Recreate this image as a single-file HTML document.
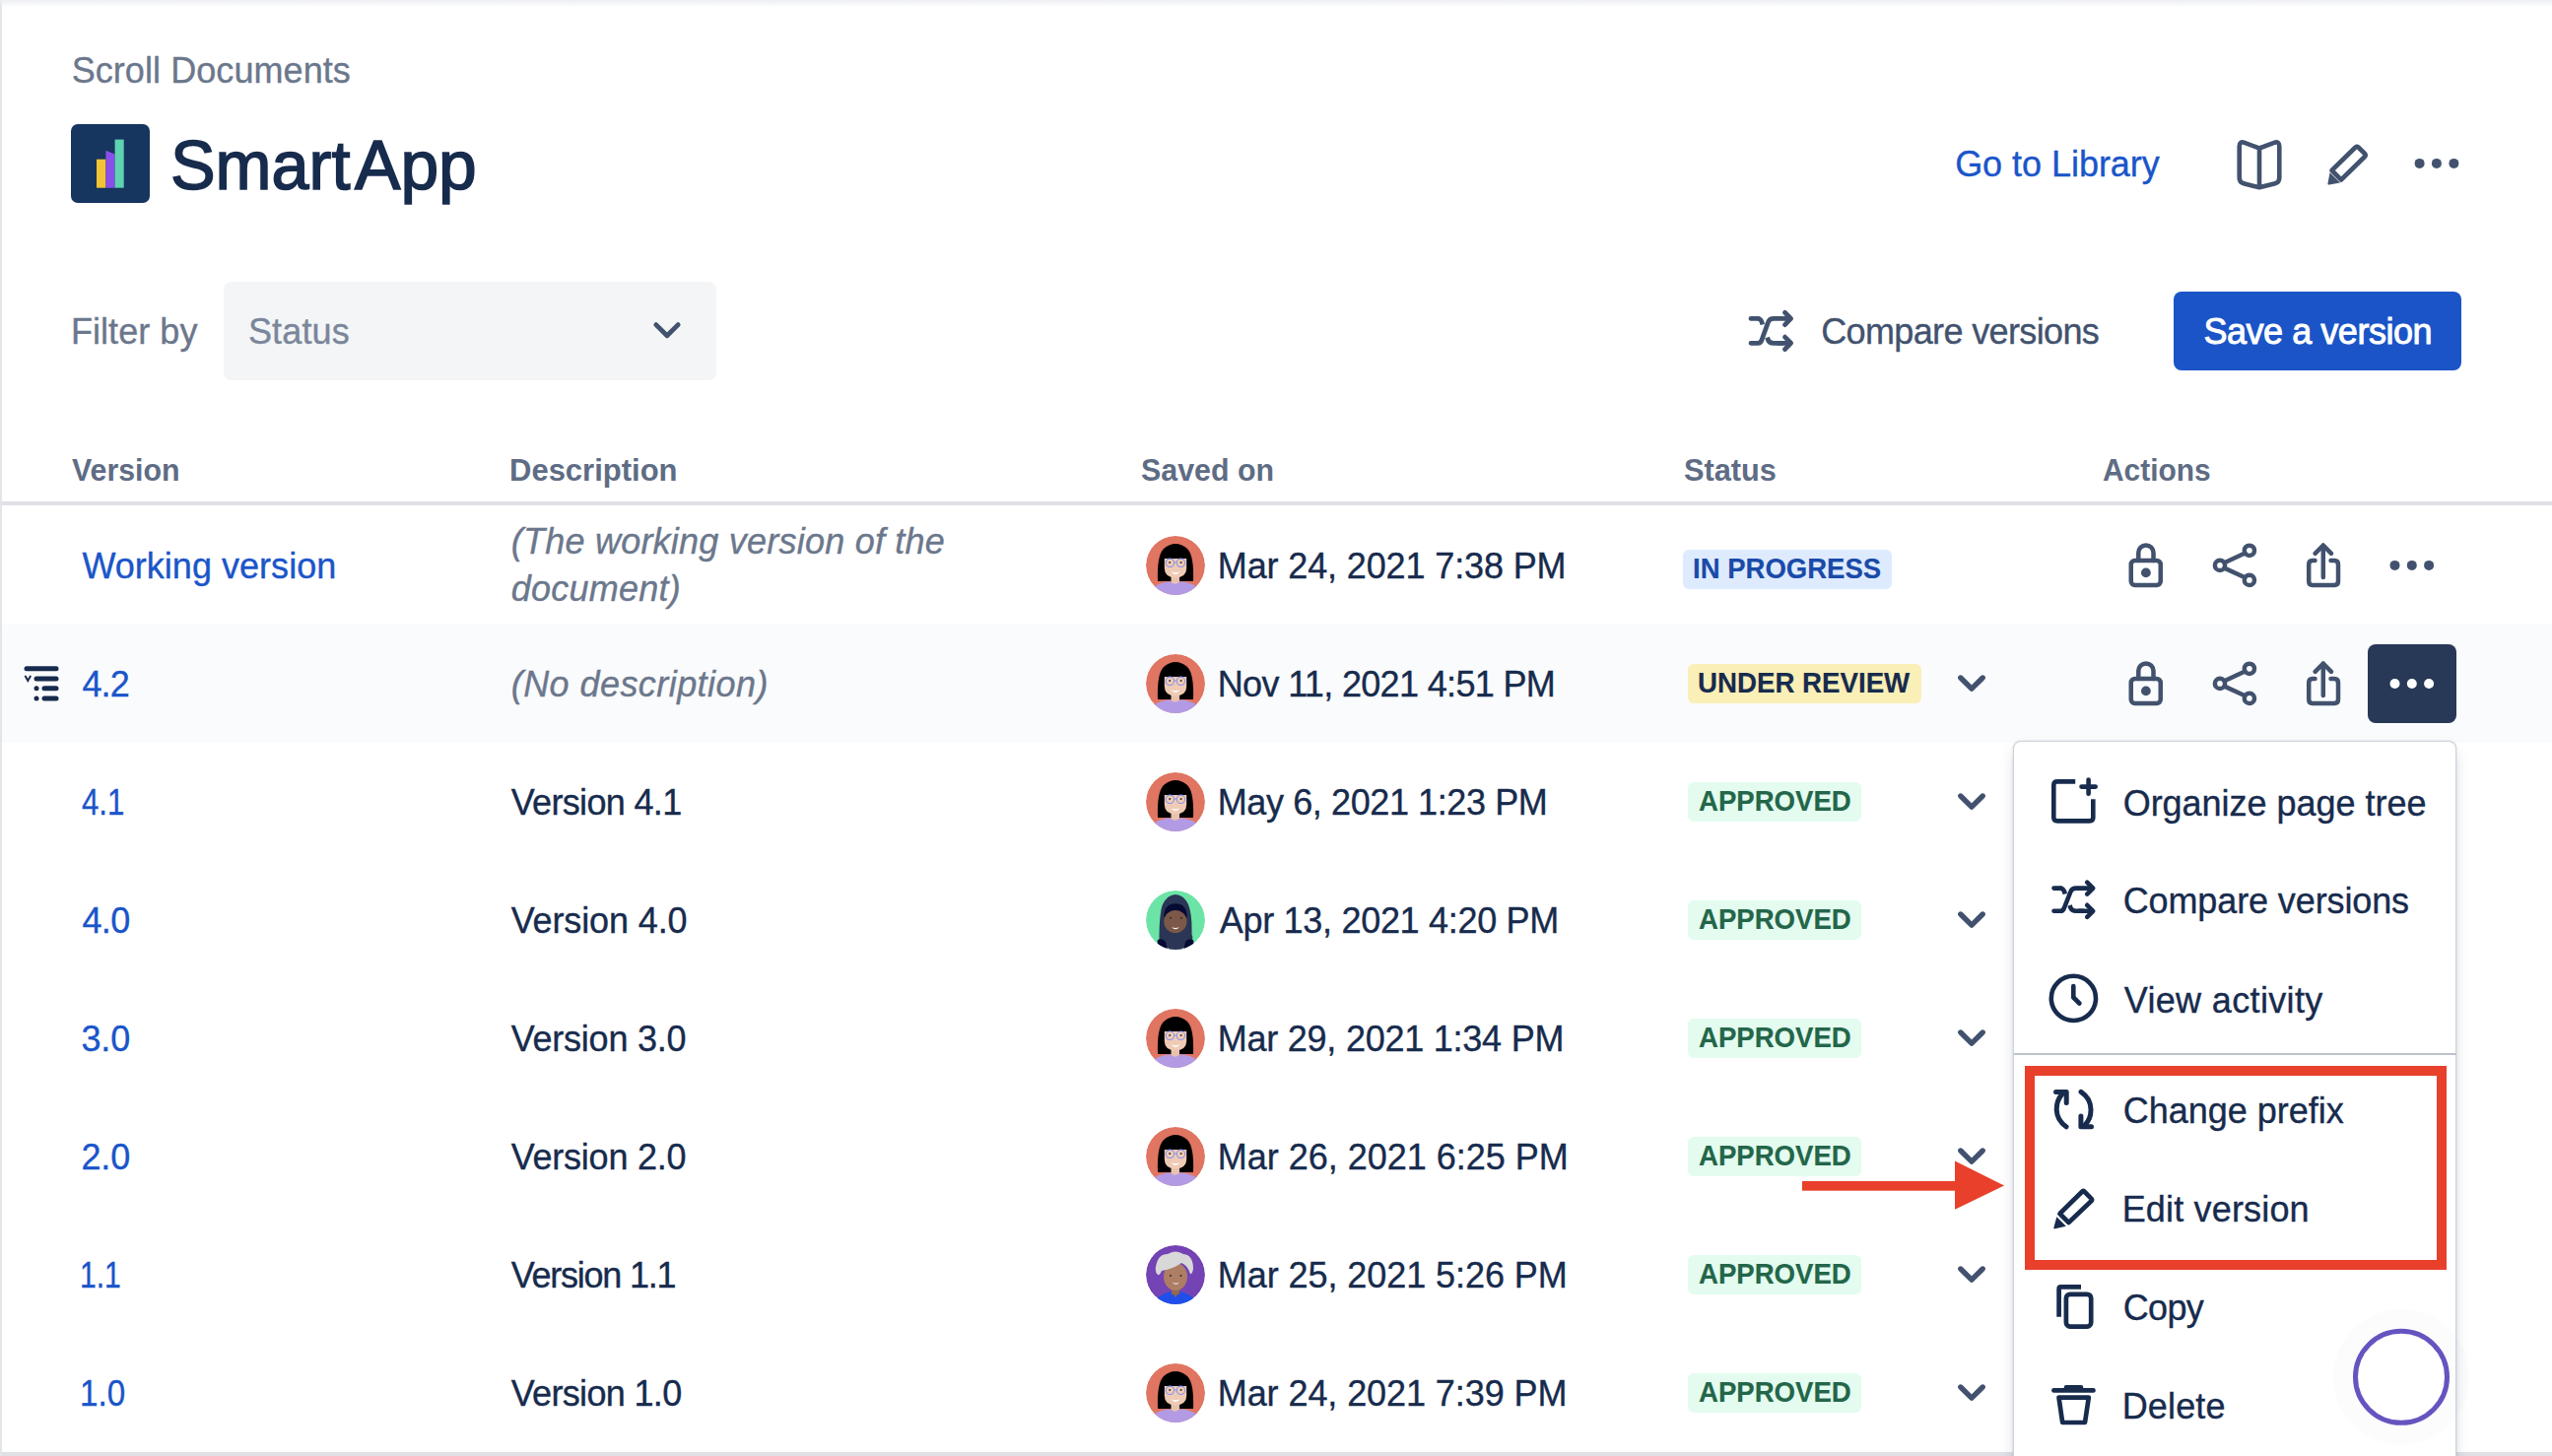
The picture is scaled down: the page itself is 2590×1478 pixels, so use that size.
<!DOCTYPE html>
<html><head><meta charset="utf-8"><title>SmartApp versions</title>
<style>
html,body{margin:0;padding:0;}
body{width:2590px;height:1478px;overflow:hidden;position:relative;background:#fff;font-family:'Liberation Sans', sans-serif;}
.t{position:absolute;white-space:nowrap;}
</style></head><body>
<div style="position:absolute;left:0;top:634px;width:2590px;height:120px;background:#fafbfc"></div><svg style="position:absolute;left:72px;top:126px" width="80" height="80" viewBox="0 0 80 80">
<rect width="80" height="80" rx="7" fill="#16355f"/>
<rect x="26" y="35.7" width="9.4" height="29" fill="#f2c434"/>
<path d="M35.4 26.8 L44.6 30.6 V64.7 H35.4 Z" fill="#8a4fe8"/>
<rect x="44.6" y="15.6" width="9.1" height="49.1" fill="#5fd2b1"/>
</svg><div style="position:absolute;left:227px;top:286px;width:500px;height:100px;border-radius:8px;background:#f4f5f7"></div><div style="position:absolute;left:2206px;top:296px;width:292px;height:80px;border-radius:8px;background:#1b54c7"></div><div style="position:absolute;left:0;top:509px;width:2590px;height:4px;background:#dfe1e6"></div><div style="position:absolute;left:1708px;top:558px;width:212px;height:40px;border-radius:6px;background:#deebff"></div><div style="position:absolute;left:1712.8px;top:674px;width:237px;height:40px;border-radius:6px;background:#faefb6"></div><div style="position:absolute;left:1713px;top:794px;width:176px;height:40px;border-radius:6px;background:#e3fcef"></div><div style="position:absolute;left:1713px;top:914px;width:176px;height:40px;border-radius:6px;background:#e3fcef"></div><div style="position:absolute;left:1713px;top:1034px;width:176px;height:40px;border-radius:6px;background:#e3fcef"></div><div style="position:absolute;left:1713px;top:1154px;width:176px;height:40px;border-radius:6px;background:#e3fcef"></div><div style="position:absolute;left:1713px;top:1274px;width:176px;height:40px;border-radius:6px;background:#e3fcef"></div><div style="position:absolute;left:1713px;top:1394px;width:176px;height:40px;border-radius:6px;background:#e3fcef"></div><svg style="position:absolute;left:1163px;top:544px" width="60" height="60" viewBox="0 0 60 60"><defs><clipPath id="cp0"><circle cx="30" cy="30" r="30"/></clipPath></defs><g clip-path="url(#cp0)"><circle cx="30" cy="30" r="30" fill="#e07562"/>
<path d="M12 46 Q11 20 18 13 Q30 3 42 13 Q49 20 48 46 Z" fill="#000"/>
<path d="M18 40 Q22 47 30 48 L30 60 L18 60 Z" fill="#000" opacity="0"/>
<rect x="25.5" y="38" width="8.5" height="12" fill="#e9c2ae"/>
<path d="M18.8 23 H41.2 V33 Q41 42 30 42.5 Q19 42 18.8 33 Z" fill="#efcbb5"/>
<path d="M8 52 Q15 46.5 25 46.5 Q29.5 51 34 46.5 Q45 46.5 52 52 Q42 62 30 62 Q18 62 8 52 Z" fill="#b39ae4"/>
<g fill="none" stroke="#8593ee" stroke-width="1.05"><circle cx="24.4" cy="27.3" r="4.2"/><circle cx="35.4" cy="27.3" r="4.2"/><path d="M28.6 27 H31.2"/></g>
<circle cx="24.2" cy="27" r="1" fill="#333"/><circle cx="35.6" cy="27" r="1" fill="#333"/>
<path d="M25.5 36.3 Q30 38 34.5 36.3 Q30 41.5 25.5 36.3 Z" fill="#fff"/></g></svg><svg style="position:absolute;left:1163px;top:664px" width="60" height="60" viewBox="0 0 60 60"><defs><clipPath id="cp1"><circle cx="30" cy="30" r="30"/></clipPath></defs><g clip-path="url(#cp1)"><circle cx="30" cy="30" r="30" fill="#e07562"/>
<path d="M12 46 Q11 20 18 13 Q30 3 42 13 Q49 20 48 46 Z" fill="#000"/>
<path d="M18 40 Q22 47 30 48 L30 60 L18 60 Z" fill="#000" opacity="0"/>
<rect x="25.5" y="38" width="8.5" height="12" fill="#e9c2ae"/>
<path d="M18.8 23 H41.2 V33 Q41 42 30 42.5 Q19 42 18.8 33 Z" fill="#efcbb5"/>
<path d="M8 52 Q15 46.5 25 46.5 Q29.5 51 34 46.5 Q45 46.5 52 52 Q42 62 30 62 Q18 62 8 52 Z" fill="#b39ae4"/>
<g fill="none" stroke="#8593ee" stroke-width="1.05"><circle cx="24.4" cy="27.3" r="4.2"/><circle cx="35.4" cy="27.3" r="4.2"/><path d="M28.6 27 H31.2"/></g>
<circle cx="24.2" cy="27" r="1" fill="#333"/><circle cx="35.6" cy="27" r="1" fill="#333"/>
<path d="M25.5 36.3 Q30 38 34.5 36.3 Q30 41.5 25.5 36.3 Z" fill="#fff"/></g></svg><svg style="position:absolute;left:1163px;top:784px" width="60" height="60" viewBox="0 0 60 60"><defs><clipPath id="cp2"><circle cx="30" cy="30" r="30"/></clipPath></defs><g clip-path="url(#cp2)"><circle cx="30" cy="30" r="30" fill="#e07562"/>
<path d="M12 46 Q11 20 18 13 Q30 3 42 13 Q49 20 48 46 Z" fill="#000"/>
<path d="M18 40 Q22 47 30 48 L30 60 L18 60 Z" fill="#000" opacity="0"/>
<rect x="25.5" y="38" width="8.5" height="12" fill="#e9c2ae"/>
<path d="M18.8 23 H41.2 V33 Q41 42 30 42.5 Q19 42 18.8 33 Z" fill="#efcbb5"/>
<path d="M8 52 Q15 46.5 25 46.5 Q29.5 51 34 46.5 Q45 46.5 52 52 Q42 62 30 62 Q18 62 8 52 Z" fill="#b39ae4"/>
<g fill="none" stroke="#8593ee" stroke-width="1.05"><circle cx="24.4" cy="27.3" r="4.2"/><circle cx="35.4" cy="27.3" r="4.2"/><path d="M28.6 27 H31.2"/></g>
<circle cx="24.2" cy="27" r="1" fill="#333"/><circle cx="35.6" cy="27" r="1" fill="#333"/>
<path d="M25.5 36.3 Q30 38 34.5 36.3 Q30 41.5 25.5 36.3 Z" fill="#fff"/></g></svg><svg style="position:absolute;left:1163px;top:904px" width="60" height="60" viewBox="0 0 60 60"><defs><clipPath id="cp3"><circle cx="30" cy="30" r="30"/></clipPath></defs><g clip-path="url(#cp3)"><circle cx="30" cy="30" r="30" fill="#6ce4a6"/>
<path d="M13.5 58 Q13 24 17 14 Q22 4 30 4 Q38 4 43 14 Q47 24 46.5 44 L47.5 48 Q41 62 30 62 Q20 62 13.5 58 Z" fill="#2b3656"/>
<path d="M18.2 27 Q18.5 13.3 30 13.3 Q41.5 13.3 41.8 27 Z" fill="#050b33"/>
<ellipse cx="29.9" cy="31.5" rx="11.6" ry="11.6" fill="#7b5848"/>
<path d="M26 37 Q30 39 34 37 Q30 41.5 26 37 Z" fill="#fff"/>
<circle cx="25" cy="27.8" r="0.9" fill="#2a1a10"/><circle cx="36" cy="27.8" r="0.9" fill="#2a1a10"/>
<path d="M12 50 Q17 48 20 52 L22 62 L10 62 Z M48 50 Q43 48 40 52 L38 62 L50 62 Z" fill="#050b33"/>
<path d="M22 58 Q30 66 38 58 L38 62 L22 62 Z" fill="#f7dfe6"/></g></svg><svg style="position:absolute;left:1163px;top:1024px" width="60" height="60" viewBox="0 0 60 60"><defs><clipPath id="cp4"><circle cx="30" cy="30" r="30"/></clipPath></defs><g clip-path="url(#cp4)"><circle cx="30" cy="30" r="30" fill="#e07562"/>
<path d="M12 46 Q11 20 18 13 Q30 3 42 13 Q49 20 48 46 Z" fill="#000"/>
<path d="M18 40 Q22 47 30 48 L30 60 L18 60 Z" fill="#000" opacity="0"/>
<rect x="25.5" y="38" width="8.5" height="12" fill="#e9c2ae"/>
<path d="M18.8 23 H41.2 V33 Q41 42 30 42.5 Q19 42 18.8 33 Z" fill="#efcbb5"/>
<path d="M8 52 Q15 46.5 25 46.5 Q29.5 51 34 46.5 Q45 46.5 52 52 Q42 62 30 62 Q18 62 8 52 Z" fill="#b39ae4"/>
<g fill="none" stroke="#8593ee" stroke-width="1.05"><circle cx="24.4" cy="27.3" r="4.2"/><circle cx="35.4" cy="27.3" r="4.2"/><path d="M28.6 27 H31.2"/></g>
<circle cx="24.2" cy="27" r="1" fill="#333"/><circle cx="35.6" cy="27" r="1" fill="#333"/>
<path d="M25.5 36.3 Q30 38 34.5 36.3 Q30 41.5 25.5 36.3 Z" fill="#fff"/></g></svg><svg style="position:absolute;left:1163px;top:1144px" width="60" height="60" viewBox="0 0 60 60"><defs><clipPath id="cp5"><circle cx="30" cy="30" r="30"/></clipPath></defs><g clip-path="url(#cp5)"><circle cx="30" cy="30" r="30" fill="#e07562"/>
<path d="M12 46 Q11 20 18 13 Q30 3 42 13 Q49 20 48 46 Z" fill="#000"/>
<path d="M18 40 Q22 47 30 48 L30 60 L18 60 Z" fill="#000" opacity="0"/>
<rect x="25.5" y="38" width="8.5" height="12" fill="#e9c2ae"/>
<path d="M18.8 23 H41.2 V33 Q41 42 30 42.5 Q19 42 18.8 33 Z" fill="#efcbb5"/>
<path d="M8 52 Q15 46.5 25 46.5 Q29.5 51 34 46.5 Q45 46.5 52 52 Q42 62 30 62 Q18 62 8 52 Z" fill="#b39ae4"/>
<g fill="none" stroke="#8593ee" stroke-width="1.05"><circle cx="24.4" cy="27.3" r="4.2"/><circle cx="35.4" cy="27.3" r="4.2"/><path d="M28.6 27 H31.2"/></g>
<circle cx="24.2" cy="27" r="1" fill="#333"/><circle cx="35.6" cy="27" r="1" fill="#333"/>
<path d="M25.5 36.3 Q30 38 34.5 36.3 Q30 41.5 25.5 36.3 Z" fill="#fff"/></g></svg><svg style="position:absolute;left:1163px;top:1264px" width="60" height="60" viewBox="0 0 60 60"><defs><clipPath id="cp6"><circle cx="30" cy="30" r="30"/></clipPath></defs><g clip-path="url(#cp6)"><circle cx="30" cy="30" r="30" fill="#7443b4"/>
<path d="M10 55 Q20 46 30 47 Q40 46 50 55 Q41 62 30 62 Q19 62 10 55 Z" fill="#1f4fe8"/>
<rect x="26" y="40" width="8" height="10" fill="#93674f"/>
<path d="M26 47 L30 53 L34 47 Z" fill="#93674f"/>
<ellipse cx="30" cy="32" rx="12" ry="14" fill="#ad7e64"/>
<path d="M10 22 Q12 9 22 9 Q30 4 38 9 Q48 10 48 24 Q47 30 45 29 Q42 20 36 18 Q28 24 16 26 Q14 31 12 30 Q9 27 10 22 Z" fill="#d9d8d8"/>
<circle cx="25" cy="31" r="0.9" fill="#222"/><circle cx="35.5" cy="31" r="0.9" fill="#222"/>
<path d="M26.5 37.5 Q30.5 40 34 37.5 Q30.5 42 26.5 37.5 Z" fill="#fff"/></g></svg><svg style="position:absolute;left:1163px;top:1384px" width="60" height="60" viewBox="0 0 60 60"><defs><clipPath id="cp7"><circle cx="30" cy="30" r="30"/></clipPath></defs><g clip-path="url(#cp7)"><circle cx="30" cy="30" r="30" fill="#e07562"/>
<path d="M12 46 Q11 20 18 13 Q30 3 42 13 Q49 20 48 46 Z" fill="#000"/>
<path d="M18 40 Q22 47 30 48 L30 60 L18 60 Z" fill="#000" opacity="0"/>
<rect x="25.5" y="38" width="8.5" height="12" fill="#e9c2ae"/>
<path d="M18.8 23 H41.2 V33 Q41 42 30 42.5 Q19 42 18.8 33 Z" fill="#efcbb5"/>
<path d="M8 52 Q15 46.5 25 46.5 Q29.5 51 34 46.5 Q45 46.5 52 52 Q42 62 30 62 Q18 62 8 52 Z" fill="#b39ae4"/>
<g fill="none" stroke="#8593ee" stroke-width="1.05"><circle cx="24.4" cy="27.3" r="4.2"/><circle cx="35.4" cy="27.3" r="4.2"/><path d="M28.6 27 H31.2"/></g>
<circle cx="24.2" cy="27" r="1" fill="#333"/><circle cx="35.6" cy="27" r="1" fill="#333"/>
<path d="M25.5 36.3 Q30 38 34.5 36.3 Q30 41.5 25.5 36.3 Z" fill="#fff"/></g></svg><div class="t" style="left:72.67px;top:54px;font:normal normal 36px/36px 'Liberation Sans', sans-serif;color:#6b778c;letter-spacing:0.070px;-webkit-text-stroke:0.35px #6b778c;">Scroll Documents</div><div class="t" style="left:172.57px;top:133.4px;font:normal normal 70px/70px 'Liberation Sans', sans-serif;color:#172b4d;letter-spacing:0.000px;transform:scaleX(0.9769);transform-origin:0 0;-webkit-text-stroke:1.6px #172b4d;">Smart</div><div class="t" style="left:360.30px;top:133.4px;font:normal normal 70px/70px 'Liberation Sans', sans-serif;color:#172b4d;letter-spacing:0.000px;transform:scaleX(0.9941);transform-origin:0 0;-webkit-text-stroke:1.6px #172b4d;">App</div><div class="t" style="left:1984.17px;top:149px;font:normal normal 36px/36px 'Liberation Sans', sans-serif;color:#1a55c9;letter-spacing:-0.037px;-webkit-text-stroke:0.35px #1a55c9;">Go to Library</div><div class="t" style="left:71.88px;top:319px;font:normal normal 36px/36px 'Liberation Sans', sans-serif;color:#6b778c;letter-spacing:0.066px;-webkit-text-stroke:0.35px #6b778c;">Filter by</div><div class="t" style="left:251.88px;top:319px;font:normal normal 36px/36px 'Liberation Sans', sans-serif;color:#7a869a;letter-spacing:0.178px;-webkit-text-stroke:0.35px #7a869a;">Status</div><div class="t" style="left:1848.17px;top:319px;font:normal normal 36px/36px 'Liberation Sans', sans-serif;color:#42526e;letter-spacing:-0.631px;-webkit-text-stroke:0.35px #42526e;">Compare versions</div><div class="t" style="left:2236.45px;top:319px;font:normal normal 36px/36px 'Liberation Sans', sans-serif;color:#ffffff;letter-spacing:-0.462px;-webkit-text-stroke:0.9px #ffffff;">Save a version</div><div class="t" style="left:73.00px;top:461px;font:normal bold 32px/32px 'Liberation Sans', sans-serif;color:#5e6c84;letter-spacing:0.000px;transform:scaleX(0.9468);transform-origin:0 0;">Version</div><div class="t" style="left:516.86px;top:461px;font:normal bold 32px/32px 'Liberation Sans', sans-serif;color:#5e6c84;letter-spacing:0.000px;transform:scaleX(0.9688);transform-origin:0 0;">Description</div><div class="t" style="left:1158.00px;top:461px;font:normal bold 32px/32px 'Liberation Sans', sans-serif;color:#5e6c84;letter-spacing:0.000px;transform:scaleX(0.9487);transform-origin:0 0;">Saved on</div><div class="t" style="left:1708.80px;top:461px;font:normal bold 32px/32px 'Liberation Sans', sans-serif;color:#5e6c84;letter-spacing:0.000px;transform:scaleX(0.9608);transform-origin:0 0;">Status</div><div class="t" style="left:2134.00px;top:461px;font:normal bold 32px/32px 'Liberation Sans', sans-serif;color:#5e6c84;letter-spacing:0.000px;transform:scaleX(0.9352);transform-origin:0 0;">Actions</div><div class="t" style="left:83.38px;top:557px;font:normal normal 36px/36px 'Liberation Sans', sans-serif;color:#1a55c9;letter-spacing:0.031px;-webkit-text-stroke:0.35px #1a55c9;">Working version</div><div class="t" style="left:518.77px;top:532px;font:italic normal 36px/36px 'Liberation Sans', sans-serif;color:#6b778c;letter-spacing:0.226px;-webkit-text-stroke:0.35px #6b778c;">(The working version of the</div><div class="t" style="left:518.77px;top:580px;font:italic normal 36px/36px 'Liberation Sans', sans-serif;color:#6b778c;letter-spacing:0.244px;-webkit-text-stroke:0.35px #6b778c;">document)</div><div class="t" style="left:1235.77px;top:557px;font:normal normal 36px/36px 'Liberation Sans', sans-serif;color:#172b4d;letter-spacing:-0.124px;-webkit-text-stroke:0.35px #172b4d;">Mar 24, 2021 7:38 PM</div><div class="t" style="left:1718.13px;top:563px;font:normal bold 29px/29px 'Liberation Sans', sans-serif;color:#1a4aa8;letter-spacing:0.000px;transform:scaleX(0.9488);transform-origin:0 0;-webkit-text-stroke:0.15px #1a4aa8;">IN PROGRESS</div><div class="t" style="left:83.38px;top:677px;font:normal normal 36px/36px 'Liberation Sans', sans-serif;color:#1a55c9;letter-spacing:-0.787px;-webkit-text-stroke:0.35px #1a55c9;">4.2</div><div class="t" style="left:518.77px;top:677px;font:italic normal 36px/36px 'Liberation Sans', sans-serif;color:#6b778c;letter-spacing:0.436px;-webkit-text-stroke:0.35px #6b778c;">(No description)</div><div class="t" style="left:1235.77px;top:677px;font:normal normal 36px/36px 'Liberation Sans', sans-serif;color:#172b4d;letter-spacing:-0.659px;-webkit-text-stroke:0.35px #172b4d;">Nov 11, 2021 4:51 PM</div><div class="t" style="left:1722.92px;top:679px;font:normal bold 29px/29px 'Liberation Sans', sans-serif;color:#172b4d;letter-spacing:0.000px;transform:scaleX(0.9540);transform-origin:0 0;-webkit-text-stroke:0.15px #172b4d;">UNDER REVIEW</div><div class="t" style="left:83.38px;top:797px;font:normal normal 36px/36px 'Liberation Sans', sans-serif;color:#1a55c9;letter-spacing:0.000px;transform:scaleX(0.8659);transform-origin:0 0;-webkit-text-stroke:0.35px #1a55c9;">4.1</div><div class="t" style="left:518.67px;top:797px;font:normal normal 36px/36px 'Liberation Sans', sans-serif;color:#172b4d;letter-spacing:-0.655px;-webkit-text-stroke:0.35px #172b4d;">Version 4.1</div><div class="t" style="left:1235.77px;top:797px;font:normal normal 36px/36px 'Liberation Sans', sans-serif;color:#172b4d;letter-spacing:-0.398px;-webkit-text-stroke:0.35px #172b4d;">May 6, 2021 1:23 PM</div><div class="t" style="left:1724.08px;top:799px;font:normal bold 29px/29px 'Liberation Sans', sans-serif;color:#236649;letter-spacing:0.000px;transform:scaleX(0.9508);transform-origin:0 0;-webkit-text-stroke:0.15px #236649;">APPROVED</div><div class="t" style="left:83.38px;top:917px;font:normal normal 36px/36px 'Liberation Sans', sans-serif;color:#1a55c9;letter-spacing:-0.537px;-webkit-text-stroke:0.35px #1a55c9;">4.0</div><div class="t" style="left:518.67px;top:917px;font:normal normal 36px/36px 'Liberation Sans', sans-serif;color:#172b4d;letter-spacing:-0.125px;-webkit-text-stroke:0.35px #172b4d;">Version 4.0</div><div class="t" style="left:1237.77px;top:917px;font:normal normal 36px/36px 'Liberation Sans', sans-serif;color:#172b4d;letter-spacing:-0.299px;-webkit-text-stroke:0.35px #172b4d;">Apr 13, 2021 4:20 PM</div><div class="t" style="left:1724.08px;top:919px;font:normal bold 29px/29px 'Liberation Sans', sans-serif;color:#236649;letter-spacing:0.000px;transform:scaleX(0.9508);transform-origin:0 0;-webkit-text-stroke:0.15px #236649;">APPROVED</div><div class="t" style="left:82.38px;top:1037px;font:normal normal 36px/36px 'Liberation Sans', sans-serif;color:#1a55c9;letter-spacing:-0.037px;-webkit-text-stroke:0.35px #1a55c9;">3.0</div><div class="t" style="left:518.67px;top:1037px;font:normal normal 36px/36px 'Liberation Sans', sans-serif;color:#172b4d;letter-spacing:-0.215px;-webkit-text-stroke:0.35px #172b4d;">Version 3.0</div><div class="t" style="left:1235.77px;top:1037px;font:normal normal 36px/36px 'Liberation Sans', sans-serif;color:#172b4d;letter-spacing:-0.240px;-webkit-text-stroke:0.35px #172b4d;">Mar 29, 2021 1:34 PM</div><div class="t" style="left:1724.08px;top:1039px;font:normal bold 29px/29px 'Liberation Sans', sans-serif;color:#236649;letter-spacing:0.000px;transform:scaleX(0.9508);transform-origin:0 0;-webkit-text-stroke:0.15px #236649;">APPROVED</div><div class="t" style="left:82.38px;top:1157px;font:normal normal 36px/36px 'Liberation Sans', sans-serif;color:#1a55c9;letter-spacing:-0.037px;-webkit-text-stroke:0.35px #1a55c9;">2.0</div><div class="t" style="left:518.67px;top:1157px;font:normal normal 36px/36px 'Liberation Sans', sans-serif;color:#172b4d;letter-spacing:-0.215px;-webkit-text-stroke:0.35px #172b4d;">Version 2.0</div><div class="t" style="left:1235.77px;top:1157px;font:normal normal 36px/36px 'Liberation Sans', sans-serif;color:#172b4d;letter-spacing:-0.009px;-webkit-text-stroke:0.35px #172b4d;">Mar 26, 2021 6:25 PM</div><div class="t" style="left:1724.08px;top:1159px;font:normal bold 29px/29px 'Liberation Sans', sans-serif;color:#236649;letter-spacing:0.000px;transform:scaleX(0.9508);transform-origin:0 0;-webkit-text-stroke:0.15px #236649;">APPROVED</div><div class="t" style="left:80.81px;top:1277px;font:normal normal 36px/36px 'Liberation Sans', sans-serif;color:#1a55c9;letter-spacing:0.000px;transform:scaleX(0.8347);transform-origin:0 0;-webkit-text-stroke:0.35px #1a55c9;">1.1</div><div class="t" style="left:518.67px;top:1277px;font:normal normal 36px/36px 'Liberation Sans', sans-serif;color:#172b4d;letter-spacing:-1.225px;-webkit-text-stroke:0.35px #172b4d;">Version 1.1</div><div class="t" style="left:1235.77px;top:1277px;font:normal normal 36px/36px 'Liberation Sans', sans-serif;color:#172b4d;letter-spacing:-0.061px;-webkit-text-stroke:0.35px #172b4d;">Mar 25, 2021 5:26 PM</div><div class="t" style="left:1724.08px;top:1279px;font:normal bold 29px/29px 'Liberation Sans', sans-serif;color:#236649;letter-spacing:0.000px;transform:scaleX(0.9508);transform-origin:0 0;-webkit-text-stroke:0.15px #236649;">APPROVED</div><div class="t" style="left:80.63px;top:1397px;font:normal normal 36px/36px 'Liberation Sans', sans-serif;color:#1a55c9;letter-spacing:0.000px;transform:scaleX(0.9219);transform-origin:0 0;-webkit-text-stroke:0.35px #1a55c9;">1.0</div><div class="t" style="left:518.67px;top:1397px;font:normal normal 36px/36px 'Liberation Sans', sans-serif;color:#172b4d;letter-spacing:-0.655px;-webkit-text-stroke:0.35px #172b4d;">Version 1.0</div><div class="t" style="left:1235.77px;top:1397px;font:normal normal 36px/36px 'Liberation Sans', sans-serif;color:#172b4d;letter-spacing:-0.082px;-webkit-text-stroke:0.35px #172b4d;">Mar 24, 2021 7:39 PM</div><div class="t" style="left:1724.08px;top:1399px;font:normal bold 29px/29px 'Liberation Sans', sans-serif;color:#236649;letter-spacing:0.000px;transform:scaleX(0.9508);transform-origin:0 0;-webkit-text-stroke:0.15px #236649;">APPROVED</div><svg style="position:absolute;left:0;top:0" width="2590" height="1478" viewBox="0 0 2590 1478">
<g fill="none" stroke="#42526e" stroke-width="4.6" stroke-linejoin="round" stroke-linecap="round">
<path d="M2293 150.5 L2278 144.9 Q2272.7 143 2272.7 148.5 V180.5 Q2272.7 185 2277 186.2 L2293 190.3 L2309 186.2 Q2313.3 185 2313.3 180.5 V148.5 Q2313.3 143 2308 144.9 Z M2293 151 V189"/>
<path d="M2394 150 L2400 156 Q2401.5 157.5 2400 159 L2376 182.5 L2366.5 173 L2390.5 149.5 Q2392.5 148 2394 150 Z"/>
</g>
<path d="M2364.5 175.3 L2375 185.5 L2364 187.5 Q2362 188 2362.5 186 Z" fill="#42526e"/>
<g fill="#42526e"><circle cx="2455.6" cy="165.9" r="5"/><circle cx="2472.9" cy="165.9" r="5"/><circle cx="2490.4" cy="165.9" r="5"/></g>
</svg><svg style="position:absolute;left:0;top:0" width="2590" height="1478" viewBox="0 0 2590 1478">
<path d="M665.8 329.6 L677 340.8 L688.2 329.6" fill="none" stroke="#42526e" stroke-width="4.8" stroke-linecap="round" stroke-linejoin="round"/>
<g fill="none" stroke="#42526e" stroke-width="4.8" stroke-linecap="round" stroke-linejoin="round">
<path d="M1777 323.4 H1784"/><path d="M1783.5 323.4 H1784 Q1787.5 323.4 1788.8 329.5" stroke-linecap="butt"/>
<path d="M1777 348.3 H1784 Q1787 348.3 1788 345 L1794.5 327 Q1795.8 323.4 1800 323.4 H1816"/>
<path d="M1811.5 317.2 L1817.6 323.4 L1811.5 329.6"/>
<path d="M1793.6 342.5 L1794.2 344.6 Q1795.5 348.3 1800 348.3 H1810" stroke-linecap="butt"/><path d="M1805 348.3 H1816"/>
<path d="M1811.5 342.1 L1817.6 348.3 L1811.5 354.5"/>
</g></svg><svg style="position:absolute;left:0;top:0" width="2590" height="1478" viewBox="0 0 2590 1478"><path d="M1989.8 688 L2001 699.2 L2012.2 688" fill="none" stroke="#42526e" stroke-width="5.4" stroke-linecap="round" stroke-linejoin="round"/><path d="M1989.8 808 L2001 819.2 L2012.2 808" fill="none" stroke="#42526e" stroke-width="5.4" stroke-linecap="round" stroke-linejoin="round"/><path d="M1989.8 928 L2001 939.2 L2012.2 928" fill="none" stroke="#42526e" stroke-width="5.4" stroke-linecap="round" stroke-linejoin="round"/><path d="M1989.8 1048 L2001 1059.2 L2012.2 1048" fill="none" stroke="#42526e" stroke-width="5.4" stroke-linecap="round" stroke-linejoin="round"/><path d="M1989.8 1168 L2001 1179.2 L2012.2 1168" fill="none" stroke="#42526e" stroke-width="5.4" stroke-linecap="round" stroke-linejoin="round"/><path d="M1989.8 1288 L2001 1299.2 L2012.2 1288" fill="none" stroke="#42526e" stroke-width="5.4" stroke-linecap="round" stroke-linejoin="round"/><path d="M1989.8 1408 L2001 1419.2 L2012.2 1408" fill="none" stroke="#42526e" stroke-width="5.4" stroke-linecap="round" stroke-linejoin="round"/><g transform="translate(0 0)" fill="none" stroke="#42526e" stroke-width="4.5" stroke-linecap="round" stroke-linejoin="round">
<rect x="2162.75" y="569" width="30" height="25" rx="4"/>
<path d="M2170.3 569 V561 A7.6 7.6 0 0 1 2185.5 561 V569"/>
<circle cx="2177.9" cy="581.4" r="4.9" fill="#42526e" stroke="none"/>
<circle cx="2282.9" cy="558.8" r="5.1"/><circle cx="2253" cy="573.9" r="5.1"/><circle cx="2282.9" cy="588.9" r="5.1"/>
<path d="M2257.5 571.2 L2278.4 561.5 M2257.5 576.6 L2278.4 586.2"/>
<path d="M2349.5 569 H2347 Q2343.2 569 2343.2 573 V590 Q2343.2 594 2347 594 H2369 Q2373 594 2373 590 V573 Q2373 569 2369 569 H2365.5"/>
<path d="M2357.8 586 V553.5 M2349.6 561.8 L2357.8 553.5 L2366 561.8"/>
</g><g transform="translate(0 120)" fill="none" stroke="#42526e" stroke-width="4.5" stroke-linecap="round" stroke-linejoin="round">
<rect x="2162.75" y="569" width="30" height="25" rx="4"/>
<path d="M2170.3 569 V561 A7.6 7.6 0 0 1 2185.5 561 V569"/>
<circle cx="2177.9" cy="581.4" r="4.9" fill="#42526e" stroke="none"/>
<circle cx="2282.9" cy="558.8" r="5.1"/><circle cx="2253" cy="573.9" r="5.1"/><circle cx="2282.9" cy="588.9" r="5.1"/>
<path d="M2257.5 571.2 L2278.4 561.5 M2257.5 576.6 L2278.4 586.2"/>
<path d="M2349.5 569 H2347 Q2343.2 569 2343.2 573 V590 Q2343.2 594 2347 594 H2369 Q2373 594 2373 590 V573 Q2373 569 2369 569 H2365.5"/>
<path d="M2357.8 586 V553.5 M2349.6 561.8 L2357.8 553.5 L2366 561.8"/>
</g><g fill="#42526e"><circle cx="2430.5" cy="573.9" r="5"/><circle cx="2447.8" cy="573.9" r="5"/><circle cx="2465.1" cy="573.9" r="5"/></g></svg><svg style="position:absolute;left:0;top:0" width="200" height="800" viewBox="0 0 200 800">
<g stroke="#172b4d" stroke-width="5" stroke-linecap="round" fill="none">
<path d="M27 678.8 H57"/><path d="M37 688.9 H57"/><path d="M45 698.8 H57"/><path d="M45 708.9 H57"/>
<path d="M25.8 686.6 L28.3 691 L30.8 686.6" stroke-width="2"/>
</g>
<circle cx="37" cy="698.8" r="2.5" fill="#172b4d"/><circle cx="37" cy="708.9" r="2.5" fill="#172b4d"/>
</svg><div style="position:absolute;left:2403px;top:654px;width:90px;height:80px;border-radius:8px;background:#283857"></div><div style="position:absolute;left:0;top:1474px;width:2590px;height:4px;background:#dfe1e6"></div><svg style="position:absolute;left:0;top:0" width="2590" height="1478" viewBox="0 0 2590 1478"><g fill="#fff"><circle cx="2430.5" cy="694" r="5"/><circle cx="2447.8" cy="694" r="5"/><circle cx="2465.1" cy="694" r="5"/></g></svg><div style="position:absolute;left:2043px;top:752px;width:450px;height:760px;border-radius:8px;background:#fff;border:1.5px solid #cfd4db;box-shadow:0 8px 16px -4px rgba(9,30,66,0.25), 0 0 2px rgba(9,30,66,0.2);box-sizing:border-box"></div><div style="position:absolute;left:2044px;top:1069px;width:449px;height:2px;background:#bcc2cd"></div><div class="t" style="left:2154.68px;top:798px;font:normal normal 36px/36px 'Liberation Sans', sans-serif;color:#172b4d;letter-spacing:-0.025px;-webkit-text-stroke:0.35px #172b4d;">Organize page tree</div><div class="t" style="left:2154.68px;top:897px;font:normal normal 36px/36px 'Liberation Sans', sans-serif;color:#172b4d;letter-spacing:-0.111px;-webkit-text-stroke:0.35px #172b4d;">Compare versions</div><div class="t" style="left:2155.68px;top:998px;font:normal normal 36px/36px 'Liberation Sans', sans-serif;color:#172b4d;letter-spacing:0.354px;-webkit-text-stroke:0.35px #172b4d;">View activity</div><div class="t" style="left:2154.68px;top:1110px;font:normal normal 36px/36px 'Liberation Sans', sans-serif;color:#172b4d;letter-spacing:0.001px;-webkit-text-stroke:0.35px #172b4d;">Change prefix</div><div class="t" style="left:2153.68px;top:1210px;font:normal normal 36px/36px 'Liberation Sans', sans-serif;color:#172b4d;letter-spacing:0.171px;-webkit-text-stroke:0.35px #172b4d;">Edit version</div><div class="t" style="left:2154.68px;top:1310px;font:normal normal 36px/36px 'Liberation Sans', sans-serif;color:#172b4d;letter-spacing:-0.630px;-webkit-text-stroke:0.35px #172b4d;">Copy</div><div class="t" style="left:2153.68px;top:1410px;font:normal normal 36px/36px 'Liberation Sans', sans-serif;color:#172b4d;letter-spacing:0.162px;-webkit-text-stroke:0.35px #172b4d;">Delete</div><svg style="position:absolute;left:0;top:0" width="2590" height="1478" viewBox="0 0 2590 1478">
<g fill="none" stroke="#172b4d" stroke-width="4.6" stroke-linejoin="round">
<path d="M2106.2 793.4 H2088 Q2084.3 793.4 2084.3 797 V830 Q2084.3 833.4 2088 833.4 H2120.6 Q2124.3 833.4 2124.3 830 V811.2" stroke-linecap="butt"/>
<path d="M2119.6 791.5 V805.7 M2112.5 798.6 H2126.7" stroke-linecap="round"/>
</g>
<g fill="none" stroke="#172b4d" stroke-width="4.6" stroke-linecap="round" stroke-linejoin="round">
<path d="M2084.5 901.6 H2091"/><path d="M2090.5 901.6 H2091 Q2094.5 901.6 2095.8 907.5" stroke-linecap="butt"/>
<path d="M2084.5 924.8 H2091 Q2094 924.8 2095 921.5 L2101.5 905 Q2102.8 901.6 2107 901.6 H2123"/>
<path d="M2118.2 895.6 L2124.2 901.6 L2118.2 907.6"/>
<path d="M2100.6 919 L2101.2 921 Q2102.5 924.8 2107 924.8 H2115" stroke-linecap="butt"/><path d="M2110 924.8 H2123"/>
<path d="M2118.2 918.8 L2124.2 924.8 L2118.2 930.8"/>
</g>
<g fill="none" stroke="#172b4d" stroke-width="4.6" stroke-linecap="round" stroke-linejoin="round">
<circle cx="2104.4" cy="1013.4" r="22.6"/>
<path d="M2104.3 1001 V1012.5 L2110.3 1018.5"/>
</g>
<g fill="none" stroke="#172b4d" stroke-width="5" stroke-linecap="round" stroke-linejoin="round">
<path d="M2093 1110.5 Q2087 1117 2087.2 1126.5 Q2087.5 1137 2097 1143.8"/>
<path d="M2086.5 1108.6 H2097.2 V1119.4"/>
<path d="M2112 1108.3 Q2122 1115 2122 1126.5 Q2122 1136 2116 1142"/>
<path d="M2111.9 1133 V1143.7 H2122.5"/>
</g>
<g fill="none" stroke="#172b4d" stroke-width="4.6" stroke-linejoin="round">
<path d="M2115.3 1209.5 L2122.6 1216.8 Q2123.6 1218 2122.6 1219 L2099.5 1241 L2090.4 1232 L2113.3 1209.5 Q2114.3 1208.5 2115.3 1209.5 Z"/>
</g>
<path d="M2087.3 1235.2 L2096.8 1244.7 L2085.8 1247.3 Q2084 1247.8 2084.4 1246 Z" fill="#172b4d"/>
<g fill="none" stroke="#172b4d" stroke-width="4.7" stroke-linejoin="round">
<path d="M2112 1306.4 H2091.5 Q2089.6 1306.4 2089.6 1308.4 V1336.7" stroke-linecap="butt"/>
<rect x="2096.9" y="1313.8" width="25.3" height="32.8" rx="4"/>
<path d="M2084.4 1411.4 H2124.5 M2097 1408.4 H2112" stroke-linecap="round"/>
<path d="M2089.5 1418.6 H2119.8 L2116 1444 H2093.2 Z"/>
</g>
</svg><div style="position:absolute;left:2055px;top:1082px;width:428px;height:207px;border:10px solid #e8402b;box-sizing:border-box"></div><svg style="position:absolute;left:0;top:0" width="2590" height="1478" viewBox="0 0 2590 1478">
<rect x="1829" y="1199" width="160" height="9.7" fill="#e8402b"/>
<path d="M1984 1178.6 L2034 1203.5 L1984 1227.8 Z" fill="#e8402b"/>
<circle cx="2437" cy="1397.8" r="69" fill="rgba(9,30,66,0.012)"/>
<circle cx="2437" cy="1397.8" r="46.5" fill="#fff" stroke="#6554c0" stroke-width="5"/>
</svg><div style="position:absolute;left:0;top:0;width:2px;height:1478px;background:#e4e5e7"></div><div style="position:absolute;left:0;top:0;width:2590px;height:7px;background:linear-gradient(#eceef1,rgba(255,255,255,0))"></div>
</body></html>
